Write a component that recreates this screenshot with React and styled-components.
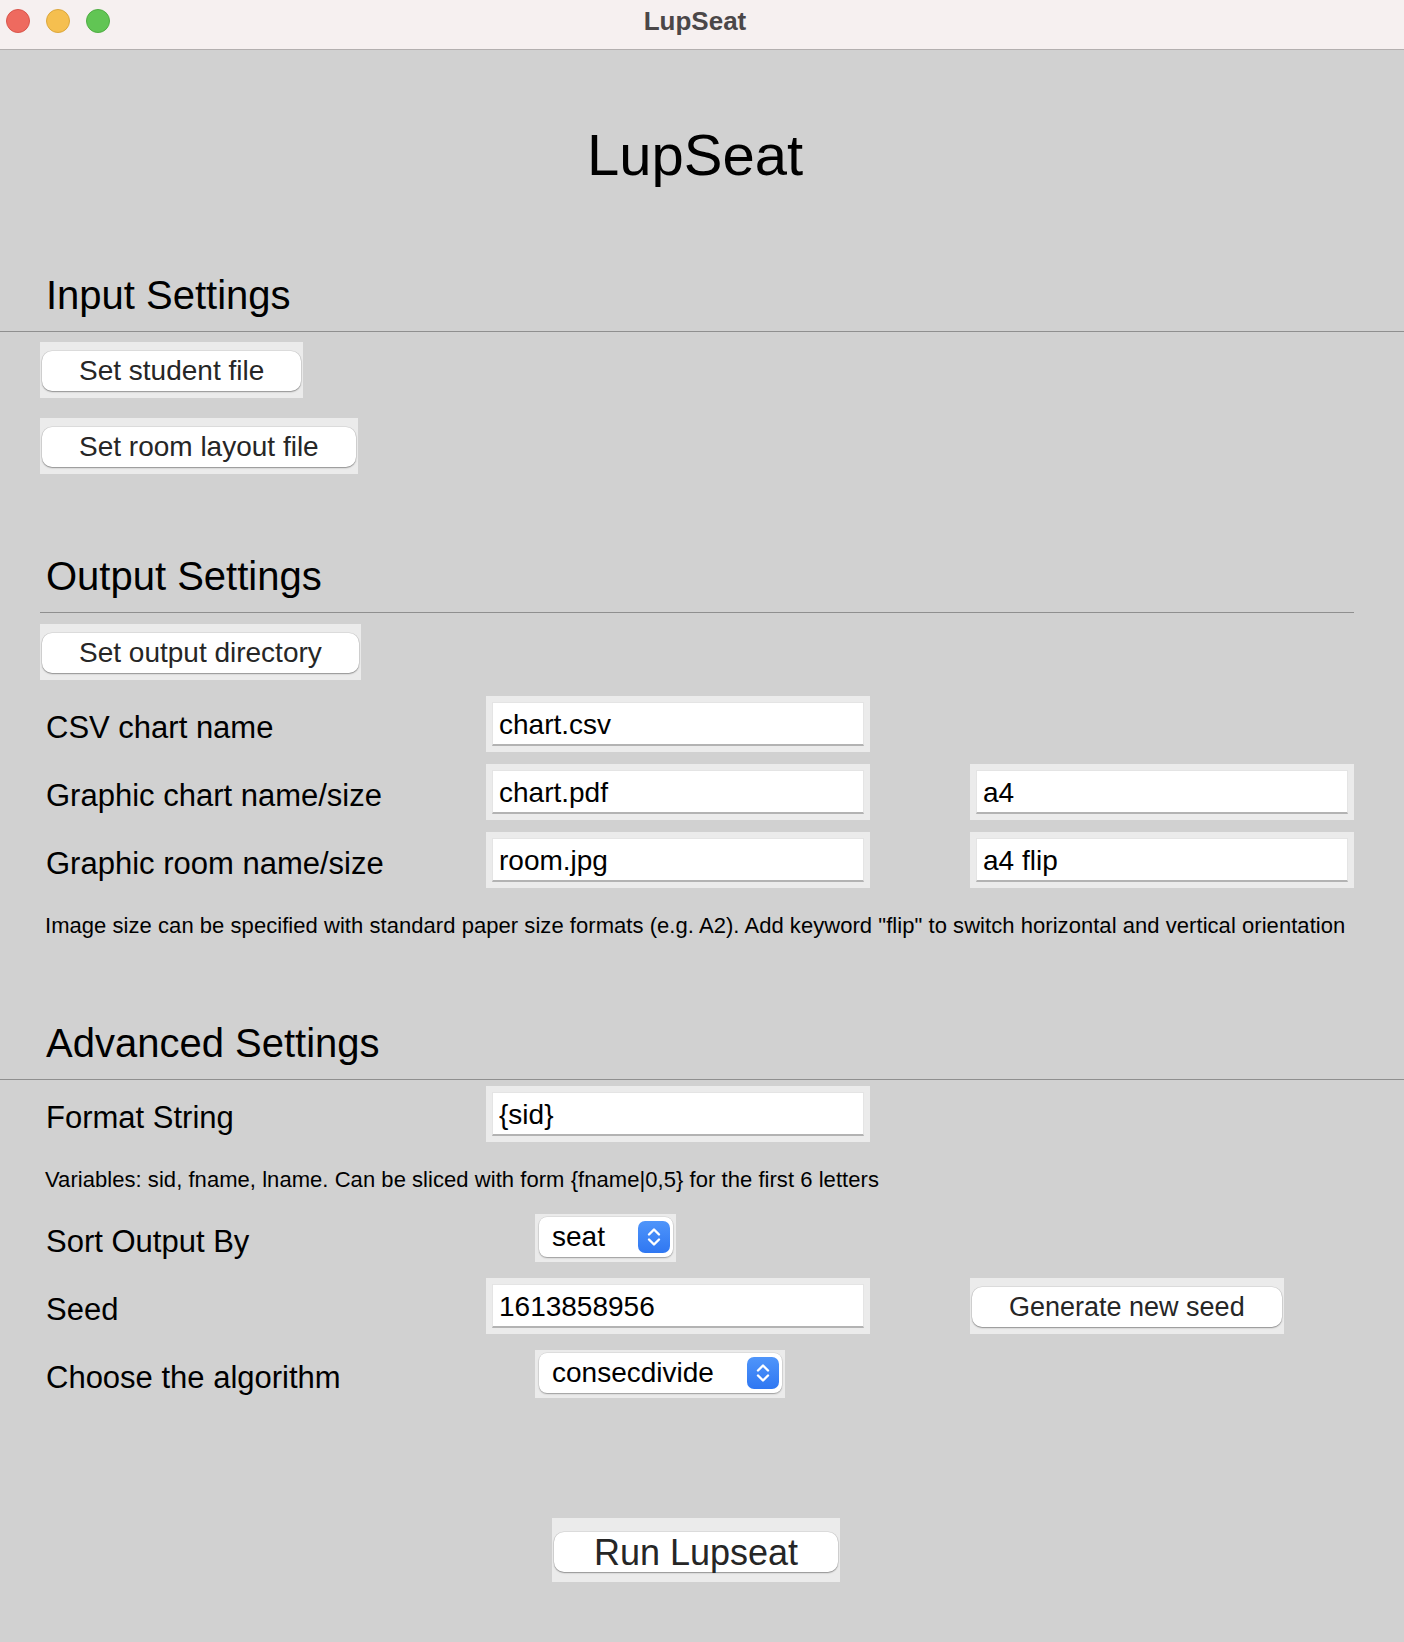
import styled, { createGlobalStyle } from "styled-components";

const GlobalStyle = createGlobalStyle`
  html, body {
    margin: 0;
    padding: 0;
    background: #d1d1d1;
  }
  body {
    font-family: "Liberation Sans", Arial, sans-serif;
    color: #000;
  }
  * {
    box-sizing: border-box;
  }
`;

const Window = styled.div`
  width: 1404px;
  min-height: 1642px;
  background: #d1d1d1;
  display: flex;
  flex-direction: column;
`;

const TitleBar = styled.header`
  height: 50px;
  background: #f6f0f0;
  border-bottom: 1px solid #b3afaf;
  display: grid;
  grid-template-columns: 1fr auto 1fr;
  align-items: center;
  padding: 0 6px 7px;
`;

const Lights = styled.div`
  display: flex;
  gap: 16px;
`;

const Light = styled.span`
  width: 24px;
  height: 24px;
  border-radius: 50%;
  background: ${(p) => p.$color};
  border: 1px solid ${(p) => p.$edge};
`;

const WindowTitle = styled.div`
  font-size: 26px;
  font-weight: 700;
  color: #4b4748;
  margin-right: 14px;
`;

const Content = styled.main`
  display: flex;
  flex-direction: column;
  padding: 0 50px 60px 40px;
`;

const AppTitle = styled.h1`
  margin: 70px 0 0;
  font-size: 58px;
  line-height: 69px;
  font-weight: 400;
  text-align: center;
  padding-right: 4px;
`;

const SectionTitle = styled.h2`
  margin: ${(p) => p.$top}px 0 0;
  padding-left: 6px;
  font-size: 40px;
  line-height: 48px;
  font-weight: 400;
`;

const Rule = styled.hr`
  border: none;
  height: 1px;
  background: #8f8f8f;
  margin: 12px ${(p) => (p.$full ? "-50px" : "0")} 0 ${(p) => (p.$full ? "-40px" : "0")};
`;

const ButtonWell = styled.div`
  align-self: flex-start;
  justify-self: start;
  grid-column: ${(p) => p.$col || "auto"};
  display: flex;
  background: #ebebeb;
  padding: ${(p) => (p.$large ? "14px 2px 10px" : "9px 2px 7px")};
  margin-top: ${(p) => p.$top || 0}px;
`;

const MacButton = styled.button`
  height: 40px;
  padding: 0 ${(p) => (p.$large ? 40 : 37)}px;
  border: none;
  border-radius: 10px;
  background: #fff;
  color: #262626;
  font-family: inherit;
  font-size: ${(p) => (p.$large ? 36 : p.$size || 28)}px;
  box-shadow: 0 1px 1.5px rgba(0, 0, 0, 0.35), 0 0 0 0.5px rgba(0, 0, 0, 0.12);
`;

const Row = styled.div`
  display: grid;
  grid-template-columns: 446px 384px 100px 384px;
  align-items: center;
  margin-top: ${(p) => p.$top}px;
`;

const Label = styled.div`
  font-size: 31px;
  line-height: 35px;
  padding: 7px 0 0 6px;
`;

const FieldWell = styled.div`
  grid-column: ${(p) => p.$col};
  height: 56px;
  padding: 6px;
  background: #ebebeb;
`;

const TextField = styled.input`
  width: 100%;
  height: 44px;
  padding: 3px 6px 0;
  border: 1px solid #e4e4e4;
  border-bottom: 2px solid #b3b3b3;
  background: #fff;
  font-family: inherit;
  font-size: 28px;
  color: #000;
  outline: none;
`;

const HelpText = styled.p`
  margin: 25px 0 0;
  padding-left: 5px;
  font-size: 22px;
  line-height: 25px;
  letter-spacing: 0.05px;
  white-space: nowrap;
`;

const SelectWell = styled.div`
  justify-self: start;
  margin-left: 49px;
  padding: 3px 3px 5px 4px;
  background: #ebebeb;
`;

const SelectBox = styled.div`
  display: flex;
  align-items: center;
  gap: 33px;
  height: 40px;
  padding: 0 3px 0 13px;
  border-radius: 8px;
  background: #fff;
  font-size: 28px;
  box-shadow: 0 1px 1.5px rgba(0, 0, 0, 0.3), 0 0 0 0.5px rgba(0, 0, 0, 0.1);
`;

const Stepper = styled.svg`
  width: 32px;
  height: 32px;
  flex: none;
`;

const RunRow = styled.div`
  display: flex;
  justify-content: center;
  margin-top: 120px;
  padding-right: 2px;
`;

function Select({ value }) {
  return (
    <SelectWell>
      <SelectBox>
        <span>{value}</span>
        <Stepper viewBox="0 0 32 32">
          <defs>
            <linearGradient id="stepBlue" x1="0" y1="0" x2="0" y2="1">
              <stop offset="0" stopColor="#4f95fa" />
              <stop offset="1" stopColor="#2f77f2" />
            </linearGradient>
          </defs>
          <rect width="32" height="32" rx="7" fill="url(#stepBlue)" />
          <path
            d="M11 13.5 L16 8.5 L21 13.5 M11 18.5 L16 23.5 L21 18.5"
            fill="none"
            stroke="#fff"
            strokeWidth="2.4"
            strokeLinecap="round"
            strokeLinejoin="round"
          />
        </Stepper>
      </SelectBox>
    </SelectWell>
  );
}

function Field({ value, col = 2 }) {
  return (
    <FieldWell $col={col}>
      <TextField defaultValue={value} />
    </FieldWell>
  );
}

export default function App() {
  return (
    <Window>
      <GlobalStyle />
      <TitleBar>
        <Lights>
          <Light $color="#ee6a5f" $edge="#d9554b" />
          <Light $color="#f5bf4f" $edge="#dca73c" />
          <Light $color="#61c554" $edge="#4fad43" />
        </Lights>
        <WindowTitle>LupSeat</WindowTitle>
        <span />
      </TitleBar>

      <Content>
        <AppTitle>LupSeat</AppTitle>

        <SectionTitle $top={82}>Input Settings</SectionTitle>
        <Rule $full />
        <ButtonWell $top={10}>
          <MacButton>Set student file</MacButton>
        </ButtonWell>
        <ButtonWell $top={20}>
          <MacButton>Set room layout file</MacButton>
        </ButtonWell>

        <SectionTitle $top={78}>Output Settings</SectionTitle>
        <Rule />
        <ButtonWell $top={11}>
          <MacButton>Set output directory</MacButton>
        </ButtonWell>
        <Row $top={16}>
          <Label>CSV chart name</Label>
          <Field value="chart.csv" />
        </Row>
        <Row $top={12}>
          <Label>Graphic chart name/size</Label>
          <Field value="chart.pdf" />
          <Field value="a4" col={4} />
        </Row>
        <Row $top={12}>
          <Label>Graphic room name/size</Label>
          <Field value="room.jpg" />
          <Field value="a4 flip" col={4} />
        </Row>
        <HelpText>
          Image size can be specified with standard paper size formats (e.g. A2). Add keyword "flip" to switch horizontal and vertical orientation
        </HelpText>

        <SectionTitle $top={81}>Advanced Settings</SectionTitle>
        <Rule $full />
        <Row $top={6}>
          <Label>Format String</Label>
          <Field value="{sid}" />
        </Row>
        <HelpText>
          Variables: sid, fname, lname. Can be sliced with form {"{fname|0,5}"} for the first 6 letters
        </HelpText>
        <Row $top={22}>
          <Label>Sort Output By</Label>
          <Select value="seat" />
        </Row>
        <Row $top={16}>
          <Label>Seed</Label>
          <Field value="1613858956" />
          <ButtonWell $col={4}>
            <MacButton $size={27}>Generate new seed</MacButton>
          </ButtonWell>
        </Row>
        <Row $top={16}>
          <Label>Choose the algorithm</Label>
          <Select value="consecdivide" />
        </Row>

        <RunRow>
          <ButtonWell $large>
            <MacButton $large>Run Lupseat</MacButton>
          </ButtonWell>
        </RunRow>
      </Content>
    </Window>
  );
}
